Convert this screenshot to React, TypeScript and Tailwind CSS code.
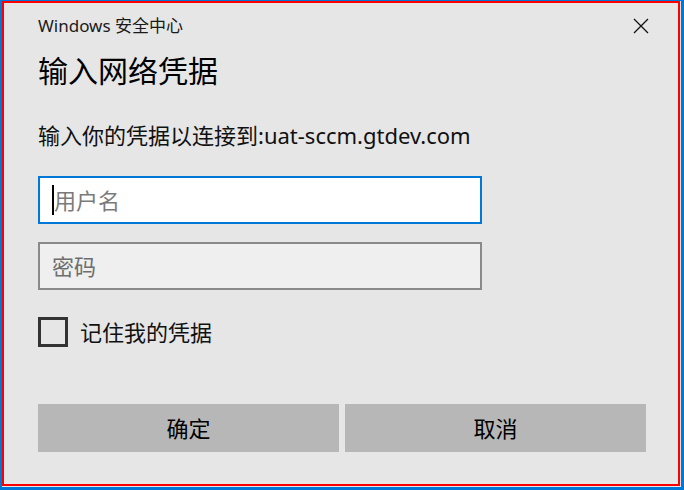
const font = "font-['Noto_Sans','Noto_Sans_CJK_SC',sans-serif]";

const App = () => {
  return (
    <div className={`w-[684px] h-[490px] bg-[#0078d7] pt-px pl-[2px] pr-[3px] pb-[3px] ${font}`}>
      <div className="h-full bg-[#e6e6e6] pr-px pb-px">
        <div className="h-full border-2 border-[#ff0000] pl-[34px] pr-[32px]">
          {/* Caption bar */}
          <div className="h-[46px] flex items-center justify-between -mr-[12px]">
            <span className="text-[17px] leading-6 text-[#1a1a1a]">Windows 安全中心</span>
            <svg className="w-4 h-4 mr-[9px]" viewBox="0 0 16 16" fill="none" stroke="#111" strokeWidth={1.3}>
              <path d="M1 1l14 14M15 1L1 15" />
            </svg>
          </div>

          {/* Title */}
          <h1 className="h-[44px] text-[30px] leading-[44px] text-black">输入网络凭据</h1>

          {/* Target */}
          <p className="mt-[26px] h-8 text-[22px] leading-8 text-[#111]">输入你的凭据以连接到:uat-sccm.gtdev.com</p>

          {/* Username */}
          <div className="mt-[25px] w-[444px] h-12 border-2 border-[#0078d7] bg-white flex items-center pl-3">
            <span className="w-[2px] h-[30px] bg-black" />
            <span className="text-[22px] leading-8 text-[#7a7a7a]">用户名</span>
          </div>

          {/* Password */}
          <div className="mt-[18px] w-[444px] h-12 border-2 border-[#8a8a8a] bg-[#efefef] flex items-center pl-3">
            <span className="text-[22px] leading-8 text-[#6e6e6e]">密码</span>
          </div>

          {/* Remember */}
          <label className="mt-[27px] h-[30px] flex items-center gap-3">
            <span className="w-[30px] h-[30px] border-[3px] border-[#333]" />
            <span className="text-[22px] leading-8 text-[#111]">记住我的凭据</span>
          </label>

          {/* Buttons */}
          <div className="mt-[57px] grid grid-cols-2 gap-[6px]">
            <button className="h-12 bg-[#b7b7b7] text-[22px] text-black">确定</button>
            <button className="h-12 bg-[#b7b7b7] text-[22px] text-black">取消</button>
          </div>
        </div>
      </div>
    </div>
  );
};

export default App;
